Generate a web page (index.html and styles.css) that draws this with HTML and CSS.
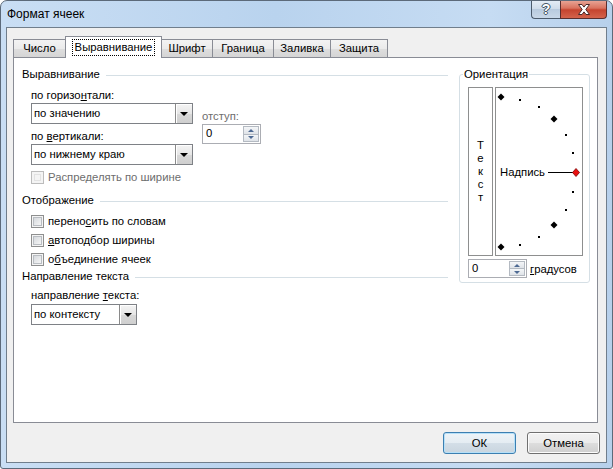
FILE: index.html
```html
<!DOCTYPE html>
<html lang="ru">
<head>
  <meta charset="UTF-8" />
  <title>Формат ячеек</title>
  <link rel="stylesheet" href="styles.css">
</head>
<body>
  <div class="window">
    <div class="titlebar">
      <span class="title">Формат ячеек</span>
      <div class="caption-btns">
        <span class="cap-btn help">?</span>
        <span class="cap-btn close">
          <svg width="14" height="11" viewBox="0 0 14 11">
            <path d="M1.5 0.5h3.5l2 2.6 2-2.6h3.5l-3.7 5 3.7 5h-3.5l-2-2.6-2 2.6h-3.5l3.7-5z" fill="#fff" stroke="#4a2a2a" stroke-width="1" stroke-linejoin="round"/>
          </svg>
        </span>
      </div>
    </div>

    <div class="client">
      <div class="tabs">
        <div class="tab t-num">Число</div>
        <div class="tab t-align active"><span class="focus">Выравнивание</span></div>
        <div class="tab t-font">Шрифт</div>
        <div class="tab t-border">Граница</div>
        <div class="tab t-fill">Заливка</div>
        <div class="tab t-protect">Защита</div>
      </div>

      <div class="panel">
        <div class="left-col">
          <div class="group-title">Выравнивание</div>
          <div class="align-block">
            <div class="align-main">
              <div class="label">по горизо<u>н</u>тали:</div>
              <div class="combo wide"><span class="combo-text">по значению</span><span class="drop"></span></div>
              <div class="label second">по <u>в</u>ертикали:</div>
              <div class="combo wide"><span class="combo-text">по нижнему краю</span><span class="drop"></span></div>
            </div>
            <div class="indent">
              <div class="label disabled">отступ:</div>
              <div class="spin indent-spin">
                <span class="spin-text">0</span>
                <span class="spin-btns"><span class="spin-up"></span><span class="spin-down"></span></span>
              </div>
            </div>
          </div>
          <div class="check disabled distribute"><span class="cb"></span>Распределять по ширине</div>

          <div class="group-title display-title">Отображение</div>
          <div class="check first"><span class="cb"></span>перено<u>с</u>ить по словам</div>
          <div class="check"><span class="cb"></span><u>а</u>втоподбор ширины</div>
          <div class="check"><span class="cb"></span>о<u>б</u>ъединение ячеек</div>

          <div class="group-title dir-title">Направление текста</div>
          <div class="label dir-label">направление <u>т</u>екста:</div>
          <div class="combo narrow"><span class="combo-text">по контексту</span><span class="drop"></span></div>
        </div>

        <fieldset class="orient">
          <legend>Ориентация</legend>
          <div class="orient-body">
            <div class="vtext">
              <span>Т</span><span>е</span><span>к</span><span>с</span><span>т</span>
            </div>
            <div class="dial">
              <svg width="86" height="167" viewBox="0 0 86 167">
                <text x="4" y="88" font-family="Liberation Sans, Arial, sans-serif" font-size="11.3" fill="#000">Надпись</text>
                <line x1="52" y1="84.5" x2="77" y2="84.5" stroke="#000" stroke-width="1"/>
                <g fill="#000">
                  <polygon points="5,5.5 8.5,9 5,12.5 1.5,9"/>
                  <polygon points="58,27.5 61.5,31 58,34.5 54.5,31"/>
                  <polygon points="58,133.5 61.5,137 58,140.5 54.5,137"/>
                  <polygon points="5,155.5 8.5,159 5,162.5 1.5,159"/>
                  <rect x="23" y="11" width="2" height="2"/>
                  <rect x="42" y="18" width="2" height="2"/>
                  <rect x="69" y="46" width="2" height="2"/>
                  <rect x="76" y="64" width="2" height="2"/>
                  <rect x="76" y="103" width="2" height="2"/>
                  <rect x="69" y="121" width="2" height="2"/>
                  <rect x="42" y="148" width="2" height="2"/>
                  <rect x="23" y="156" width="2" height="2"/>
                </g>
                <polygon points="80,80.5 83.5,84.5 80,88.5 76.5,84.5" fill="#e81010" stroke="#7a0000" stroke-width="0.8"/>
              </svg>
            </div>
          </div>
          <div class="deg-row">
            <div class="spin deg-spin">
              <span class="spin-text">0</span>
              <span class="spin-btns"><span class="spin-up"></span><span class="spin-down"></span></span>
            </div>
            <span class="deg-label"><u>г</u>радусов</span>
          </div>
        </fieldset>
      </div>

      <div class="footer">
        <button class="btn default">ОК</button>
        <button class="btn">Отмена</button>
      </div>
    </div>
  </div>
</body>
</html>
```

FILE: styles.css
```css
body {
  margin: 0;
  font-family: "Liberation Sans", Arial, sans-serif;
  font-size: 11.3px;
  color: #000;
  background: #fff;
}

.window {
  width: 613px;
  height: 469px;
  box-sizing: border-box;
  border: 1px solid #5c6a7a;
  border-radius: 7px 7px 3px 3px;
  background: linear-gradient(to right, #c9def4, #b9d3ee 45%, #c6dcf3 80%, #b7d0eb);
  display: flex;
  flex-direction: column;
  overflow: hidden;
}

/* заголовок окна */
.titlebar {
  height: 26px;
  display: flex;
  align-items: flex-start;
  flex-shrink: 0;
}

.title {
  padding: 6px 0 0 6px;
  line-height: 15px;
  font-size: 12px;
}

.caption-btns {
  margin-left: auto;
  margin-right: 5px;
  margin-top: -1px;
  display: flex;
}

.cap-btn {
  height: 19px;
  box-sizing: border-box;
  border: 1px solid #4c5b6c;
  border-top: none;
  display: flex;
  align-items: center;
  justify-content: center;
}

.help {
  width: 29px;
  border-right: none;
  border-radius: 0 0 0 4px;
  background: linear-gradient(#e6eef7, #cfdcea 50%, #b8cade 51%, #c9d8e8);
  color: #fff;
  font-weight: bold;
  font-size: 14px;
  text-shadow: 0 0 1px #2b3a4a, 1px 0 0 #4a5a6b, -1px 0 0 #4a5a6b, 0 1px 0 #4a5a6b, 0 -1px 0 #4a5a6b;
}

.close {
  width: 47px;
  border-color: #5a2e2e;
  border-radius: 0 0 4px 0;
  background: linear-gradient(#e9a99b, #d9735f 45%, #c5442f 55%, #d4634c);
}

/* клиентская область */
.client {
  flex: 1;
  margin: 0 5px 5px 5px;
  border: 1px solid #707e8c;
  background: #f0f0f0;
  display: flex;
  flex-direction: column;
  padding: 8px 0 8px 6px;
}

.tabs {
  display: flex;
  align-items: flex-end;
  height: 21px;
}

.tab {
  height: 18px;
  box-sizing: border-box;
  border: 1px solid #898c95;
  border-bottom: none;
  margin-left: -1px;
  background: linear-gradient(#f3f3f3, #ebebeb 50%, #dedede 51%, #d5d5d5);
  display: flex;
  align-items: center;
  justify-content: center;
  line-height: 15px;
}

.t-num {
  width: 53px;
  margin-left: 0;
}

.t-align {
  width: 97px;
}

.t-font {
  width: 52px;
}

.t-border {
  width: 62px;
}

.t-fill {
  width: 58px;
}

.t-protect {
  width: 58px;
}

.tab.active {
  height: 22px;
  margin-bottom: -1px;
  padding-bottom: 1px;
  background: #fff;
  position: relative;
  z-index: 1;
}

.focus {
  border: 1px dotted #000;
  padding: 0 2px;
}

.panel {
  height: 366px;
  box-sizing: border-box;
  margin-right: 8px;
  border: 1px solid #898c95;
  background: #fff;
  display: flex;
  padding: 9px 7px 0 0;
  gap: 11px;
}

.left-col {
  width: 434px;
  padding-left: 8px;
  box-sizing: border-box;
  display: flex;
  flex-direction: column;
  align-items: flex-start;
}

.group-title {
  align-self: stretch;
  display: flex;
  align-items: center;
  line-height: 15px;
}

.group-title::after {
  content: "";
  flex: 1;
  border-top: 1px solid #d5dfe5;
  margin-left: 6px;
  margin-top: 1px;
}

.display-title {
  margin-top: 8px;
}

.dir-title {
  margin-top: 2px;
}

.label {
  line-height: 15px;
  margin-left: 9px;
}

.label.second {
  margin-top: 5px;
}

.disabled {
  color: #6d6d6d;
}

.align-block {
  display: flex;
  margin-top: 6px;
}

.align-main {
  display: flex;
  flex-direction: column;
  align-items: flex-start;
}

.indent {
  margin-left: 9px;
  padding-top: 21px;
  display: flex;
  flex-direction: column;
  align-items: flex-start;
}

.indent .label {
  margin-left: 0;
}

/* выпадающие списки */
.combo {
  margin-left: 9px;
  height: 21px;
  box-sizing: border-box;
  border: 1px solid #7e8186;
  background: #fff;
  display: flex;
  align-items: stretch;
}

.combo.wide {
  width: 162px;
}

.combo.narrow {
  width: 106px;
  margin-top: 1px;
}

.combo-text {
  flex: 1;
  padding-left: 2px;
  line-height: 19px;
}

.drop {
  width: 17px;
  box-sizing: border-box;
  border-left: 1px solid #8a8a8a;
  background: linear-gradient(#f4f4f4, #e6e6e6 50%, #d8d8d8 51%, #cfcfcf);
  display: flex;
  align-items: center;
  justify-content: center;
  box-shadow: inset 1px 1px 0 #fff;
}

.drop::after {
  content: "";
  border-left: 4px solid transparent;
  border-right: 4px solid transparent;
  border-top: 4px solid #000;
}

/* счётчики */
.spin {
  box-sizing: border-box;
  border: 1px solid #abadb3;
  background: #fff;
  display: flex;
}

.indent-spin {
  width: 59px;
  height: 20px;
}

.deg-spin {
  width: 59px;
  height: 19px;
}

.spin-text {
  flex: 1;
  padding-left: 3px;
  line-height: 17px;
}

.spin-btns {
  width: 16px;
  display: flex;
  flex-direction: column;
  padding: 1px 1px 1px 0;
}

.spin-up,
.spin-down {
  flex: 1;
  border: 1px solid #b4bac2;
  background: linear-gradient(#f4f6f8, #dfe3e8);
  display: flex;
  align-items: center;
  justify-content: center;
}

.spin-down {
  border-top: none;
}

.spin-up::after {
  content: "";
  border-left: 3px solid transparent;
  border-right: 3px solid transparent;
  border-bottom: 3px solid #4e6a93;
}

.spin-down::after {
  content: "";
  border-left: 3px solid transparent;
  border-right: 3px solid transparent;
  border-top: 3px solid #4e6a93;
}

/* флажки */
.check {
  display: flex;
  align-items: center;
  line-height: 15px;
  margin-left: 9px;
  margin-top: 4px;
}

.check.distribute {
  margin-top: 5px;
}

.check.first {
  margin-top: 6px;
}

.cb {
  width: 13px;
  height: 13px;
  box-sizing: border-box;
  margin-right: 4px;
  border: 1px solid #8e8f8f;
  background: linear-gradient(135deg, #cdd1d6, #eff0f1 70%, #f7f7f7);
  box-shadow: inset 0 0 0 1px #f4f4f4, inset 0 0 0 2px #b9bdc2;
}

.check.disabled .cb {
  border-color: #bcbcbc;
  background: #f4f4f4;
  box-shadow: inset 0 0 0 2px #f4f4f4, inset 0 0 0 3px #e2e2e2;
}

.dir-label {
  margin-top: 4px;
}

/* ориентация */
.orient {
  margin: 0;
  width: 131px;
  height: 216px;
  box-sizing: border-box;
  border: 1px solid #d5dfe5;
  border-radius: 3px;
  padding: 5px 6px 4px 8px;
  flex-shrink: 0;
}

.orient legend {
  padding: 0 1px;
  margin-left: -5px;
  line-height: 15px;
}

.orient-body {
  display: flex;
  gap: 2px;
}

.vtext {
  width: 25px;
  height: 169px;
  box-sizing: border-box;
  border: 1px solid #8e8f8f;
  display: flex;
  flex-direction: column;
  align-items: center;
  justify-content: center;
  line-height: 13px;
}

.dial {
  width: 88px;
  height: 169px;
  box-sizing: border-box;
  border: 1px solid #8e8f8f;
}

.dial svg {
  display: block;
}

.deg-row {
  display: flex;
  align-items: center;
  margin-top: 3px;
}

.deg-label {
  margin-left: 3px;
}

/* кнопки */
.footer {
  display: flex;
  justify-content: flex-end;
  gap: 11px;
  margin-top: 9px;
  padding-right: 6px;
}

.btn {
  width: 73px;
  height: 22px;
  margin: 0;
  padding: 0;
  font-family: inherit;
  font-size: 11.3px;
  color: #000;
  border: 1px solid #707070;
  border-radius: 3px;
  background: linear-gradient(#f2f2f2, #ebebeb 50%, #dddddd 51%, #cfcfcf);
  box-shadow: inset 0 0 0 1px #fcfcfc;
}

.btn.default {
  border-color: #3c7fb1;
  box-shadow: inset 0 0 0 1px #b6e0f8;
  background: linear-gradient(#eef4f8, #e4ecf2 50%, #d3dee7 51%, #c9d5df);
}
```
